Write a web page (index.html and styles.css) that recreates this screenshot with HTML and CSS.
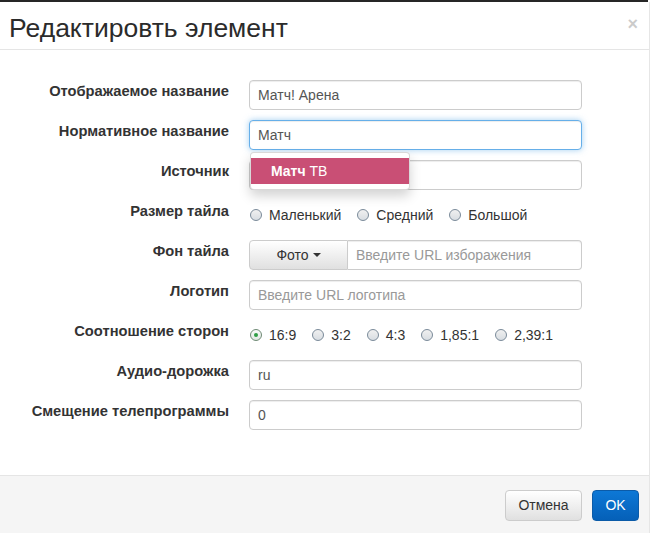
FILE: index.html
```html
<!DOCTYPE html>
<html lang="ru">
<head>
<meta charset="utf-8">
<title>Редактировть элемент</title>
<link rel="stylesheet" href="styles.css">
</head>
<body>
<div class="topbar"></div>
<div class="modal">
  <div class="modal-header">
    <h4 class="modal-title">Редактировть элемент</h4>
    <span class="close">×</span>
  </div>
  <div class="modal-body">
    <div class="form">
      <label class="lbl">Отображаемое название</label>
      <div class="ctrl"><div class="input">Матч! Арена</div></div>

      <label class="lbl">Нормативное название</label>
      <div class="ctrl"><div class="input focus">Матч</div></div>

      <label class="lbl">Источник</label>
      <div class="ctrl">
        <div class="input"></div>
        <div class="dropdown">
          <div class="dd-item"><b>Матч</b> ТВ</div>
        </div>
      </div>

      <label class="lbl">Размер тайла</label>
      <div class="ctrl radios">
        <span class="radio"><i class="rb"></i>Маленький</span>
        <span class="radio"><i class="rb"></i>Средний</span>
        <span class="radio"><i class="rb"></i>Большой</span>
      </div>

      <label class="lbl">Фон тайла</label>
      <div class="ctrl group">
        <span class="btn-foto">Фото <i class="caret"></i></span>
        <div class="input joined placeholder">Введите URL изборажения</div>
      </div>

      <label class="lbl">Логотип</label>
      <div class="ctrl"><div class="input placeholder">Введите URL логотипа</div></div>

      <label class="lbl">Соотношение сторон</label>
      <div class="ctrl radios">
        <span class="radio"><i class="rb checked"></i>16:9</span>
        <span class="radio"><i class="rb"></i>3:2</span>
        <span class="radio"><i class="rb"></i>4:3</span>
        <span class="radio"><i class="rb"></i>1,85:1</span>
        <span class="radio"><i class="rb"></i>2,39:1</span>
      </div>

      <label class="lbl">Аудио-дорожка</label>
      <div class="ctrl"><div class="input">ru</div></div>

      <label class="lbl">Смещение телепрограммы</label>
      <div class="ctrl"><div class="input">0</div></div>
    </div>
  </div>
  <div class="modal-footer">
    <span class="btn btn-default">Отмена</span>
    <span class="btn btn-primary">OK</span>
  </div>
</div>
</body>
</html>
```
FILE: styles.css
```css
html, body {
  margin: 0;
  padding: 0;
  background: #fff;
  font-family: "Liberation Sans", Arial, sans-serif;
  font-size: 14px;
  color: #333;
}
.topbar {
  height: 2px;
  width: 648px;
  background: #262626;
}
.modal {
  width: 649px;
  border-right: 1px solid #e6e6e6;
  background: #fff;
}
.modal-header {
  height: 47px;
  border-bottom: 1px solid #e5e5e5;
  display: flex;
  align-items: flex-start;
  justify-content: space-between;
  padding: 0 11px 0 9px;
}
.modal-title {
  margin: 11px 0 0 0;
  font-size: 26.5px;
  font-weight: normal;
  line-height: 30px;
  color: #2b2b2b;
}
.close {
  margin-top: 10px;
  font-size: 18px;
  font-weight: bold;
  color: #000;
  opacity: 0.2;
  line-height: 24px;
}
.modal-body {
  padding: 30px 0 45px 0;
}
.form {
  display: grid;
  grid-template-columns: 229px 333px;
  column-gap: 20px;
  row-gap: 10px;
  grid-auto-rows: 30px;
}
.lbl {
  text-align: right;
  font-weight: bold;
  font-size: 14.7px;
  padding-top: 3px;
  line-height: 16px;
  color: #333;
}
.ctrl {
  position: relative;
}
.input {
  box-sizing: border-box;
  height: 30px;
  border: 1px solid #ccc;
  border-radius: 4px;
  padding: 0 8px;
  line-height: 28px;
  box-shadow: inset 0 1px 1px rgba(0,0,0,.075);
  color: #555;
  background: #fff;
}
.input.focus {
  border-color: #66afe9;
  box-shadow: inset 0 1px 1px rgba(0,0,0,.075), 0 0 6px rgba(102,175,233,.6);
}
.placeholder {
  color: #999;
}
.dropdown {
  position: absolute;
  left: 1px;
  top: -8px;
  width: 160px;
  box-sizing: border-box;
  padding: 5px 0 5px;
  background: #fff;
  border: 1px solid rgba(0,0,0,.15);
  border-radius: 4px;
  box-shadow: 0 6px 12px rgba(0,0,0,.175);
  z-index: 2;
}
.dd-item {
  height: 26px;
  line-height: 26px;
  padding-left: 20px;
  background: #c94f75;
  color: #fff;
}
.radios {
  display: flex;
  align-items: center;
  gap: 15px;
  color: #333;
}
.radio {
  display: inline-flex;
  align-items: center;
}
.rb {
  display: inline-block;
  box-sizing: border-box;
  width: 12px;
  height: 12px;
  margin: 0 7px 0 1px;
  border-radius: 50%;
  border: 1px solid #7a8a99;
  background: linear-gradient(#f0f0f0, #d8dde2);
  position: relative;
}
.rb.checked {
  border-color: #6f8a75;
  background: linear-gradient(#fafafa, #e0e8e2);
}
.rb.checked::after {
  content: "";
  position: absolute;
  left: 3px;
  top: 3px;
  width: 4px;
  height: 4px;
  border-radius: 50%;
  background: #2f9e44;
}
.group {
  display: flex;
}
.btn-foto {
  box-sizing: border-box;
  width: 99px;
  height: 30px;
  border: 1px solid #ccc;
  border-radius: 4px 0 0 4px;
  background: linear-gradient(#fff, #e0e0e0);
  display: flex;
  align-items: center;
  justify-content: center;
  gap: 4px;
  color: #333;
}
.caret {
  display: inline-block;
  width: 0;
  height: 0;
  border-top: 4px solid #333;
  border-left: 4px solid transparent;
  border-right: 4px solid transparent;
}
.input.joined {
  flex: 1;
  border-left: 0;
  border-radius: 0 4px 4px 0;
}
.modal-footer {
  border-top: 1px solid #e5e5e5;
  background: #f5f5f5;
  height: 57px;
  display: flex;
  justify-content: flex-end;
  align-items: flex-start;
  gap: 10px;
  padding: 14px 10px 0 0;
}
.btn {
  box-sizing: border-box;
  height: 31px;
  line-height: 29px;
  border-radius: 4px;
  padding: 0 12px;
  font-size: 14px;
  text-align: center;
}
.btn-default {
  width: 77px;
  border: 1px solid #ccc;
  background: linear-gradient(#fff, #e0e0e0);
  color: #333;
}
.btn-primary {
  width: 47px;
  border: 1px solid #0b5ba8;
  background: linear-gradient(#0d78d6, #0560b8);
  color: #fff;
}
```
